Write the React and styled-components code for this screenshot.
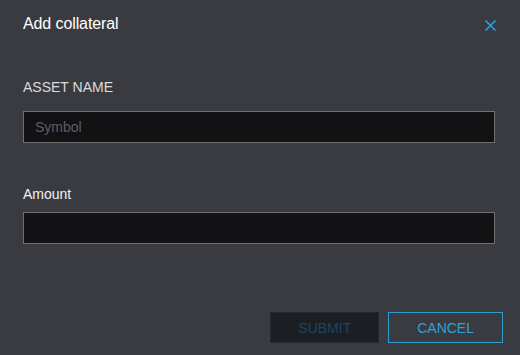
import React from "react";
import styled, { createGlobalStyle } from "styled-components";

const GlobalStyle = createGlobalStyle`
  html, body {
    margin: 0;
    padding: 0;
    background: #3a3b40;
  }
  body {
    font-family: "Liberation Sans", Arial, sans-serif;
  }
`;

const Dialog = styled.div`
  width: 520px;
  height: 355px;
  box-sizing: border-box;
  background: #3a3b40;
  display: flex;
  flex-direction: column;
`;

const Header = styled.div`
  display: flex;
  justify-content: space-between;
  align-items: center;
  padding: 14px 23px 0 23px;
  height: 20px;
`;

const Title = styled.h2`
  margin: 0;
  font-size: 16px;
  line-height: 20px;
  font-weight: normal;
  color: #ffffff;
  letter-spacing: -0.1px;
`;

const CloseButton = styled.button`
  background: none;
  border: none;
  padding: 0;
  width: 13px;
  height: 13px;
  margin-top: 3px;
  margin-right: 0;
  display: flex;
  cursor: pointer;
`;

const Body = styled.div`
  padding: 0 25px 0 23px;
  display: flex;
  flex-direction: column;
`;

const Label = styled.label`
  display: block;
  font-size: 14px;
  line-height: 16px;
  color: ${(p) => (p.$caps ? "#dcdcdc" : "#f2f2f2")};
  margin-top: ${(p) => p.$top}px;
  margin-bottom: ${(p) => p.$bottom}px;
`;

const Input = styled.input`
  box-sizing: border-box;
  width: 472px;
  height: 32px;
  background: #121214;
  border: 1px solid #707070;
  outline: none;
  padding: 0 11px;
  font-family: inherit;
  font-size: 14px;
  color: #eee;
  &::placeholder {
    color: #5e5e60;
  }
`;

const Footer = styled.div`
  margin-top: auto;
  display: flex;
  justify-content: flex-end;
  gap: 9px;
  padding: 0 17px 12px 0;
`;

const Button = styled.button`
  box-sizing: border-box;
  height: 31px;
  padding: 0 ${(p) => (p.$outline ? 28 : 27)}px;
  font-family: inherit;
  font-size: 14px;
  text-transform: uppercase;
  background: ${(p) => (p.$outline ? "transparent" : "#1b1e23")};
  color: ${(p) => (p.$outline ? "#2ea2d6" : "#1c4760")};
  border: 1px solid ${(p) => (p.$outline ? "#2b9fcf" : "#1f2a30")};
  cursor: ${(p) => (p.disabled ? "default" : "pointer")};
`;

function AddCollateral() {
  return (
    <Dialog>
      <Header>
        <Title>Add collateral</Title>
        <CloseButton aria-label="close">
          <svg width="13" height="13" viewBox="0 0 13 13">
            <path
              d="M1.5 1.5 L11.5 11.5 M11.5 1.5 L1.5 11.5"
              stroke="#2aa3dc"
              strokeWidth="1.6"
              fill="none"
            />
          </svg>
        </CloseButton>
      </Header>
      <Body>
        <Label $caps $top={45} $bottom={16}>
          ASSET NAME
        </Label>
        <Input placeholder="Symbol" />
        <Label $top={43} $bottom={10}>
          Amount
        </Label>
        <Input />
      </Body>
      <Footer>
        <Button disabled>Submit</Button>
        <Button $outline>Cancel</Button>
      </Footer>
    </Dialog>
  );
}

export default function App() {
  return (
    <>
      <GlobalStyle />
      <AddCollateral />
    </>
  );
}
